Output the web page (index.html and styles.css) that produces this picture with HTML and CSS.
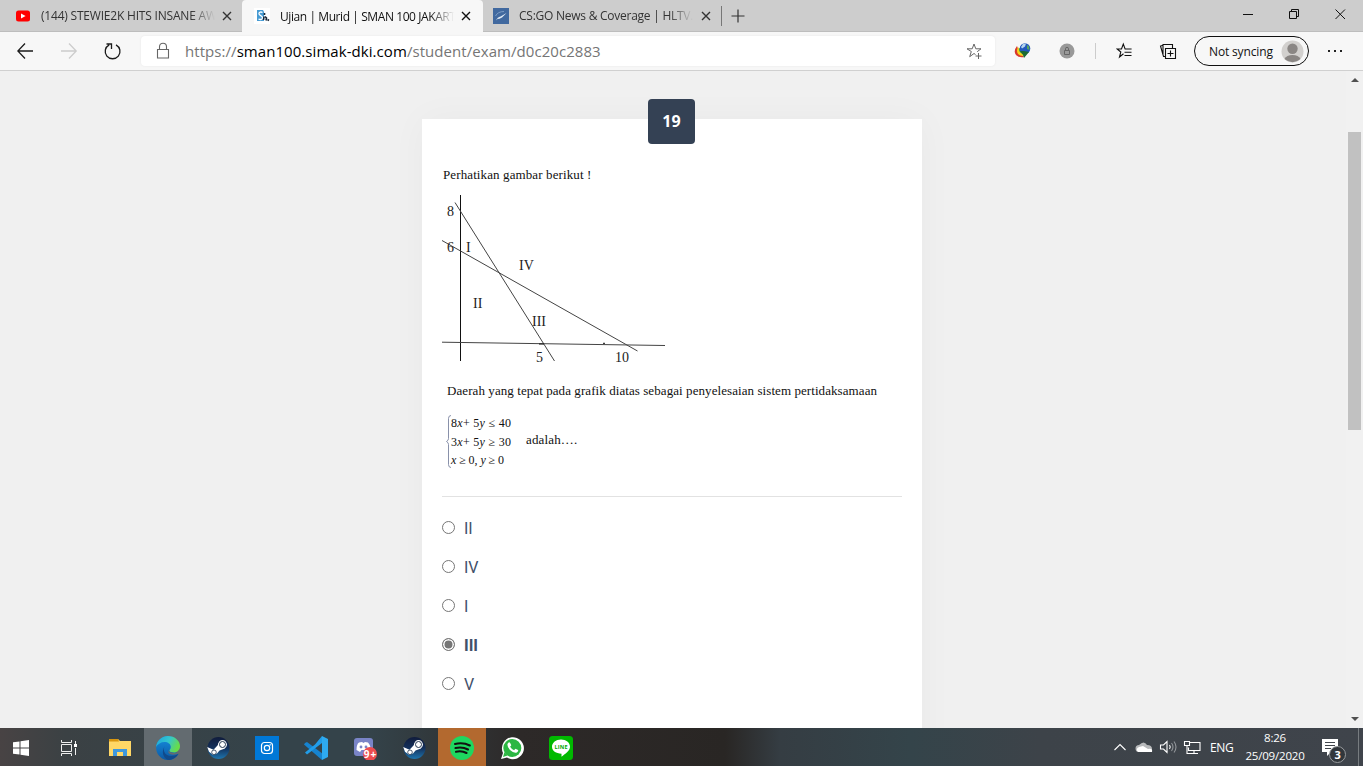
FILE: index.html
```html
<!DOCTYPE html>
<html lang="id">
<head>
<meta charset="utf-8">
<title>Ujian | Murid | SMAN 100 JAKARTA</title>
<link rel="stylesheet" href="styles.css">
</head>
<body>
<div class="screen">
  <header class="tabs">
    <div class="tab tab-first">
      <svg class="fav" width="16" height="16" viewBox="0 0 16 16"><rect x="1" y="2.500" width="14" height="11" rx="2.500" fill="#f00"/><path d="M6 5.400v5.200L10.600 8z" fill="#fff"/></svg>
      <span class="tab-title">(144) STEWIE2K HITS INSANE AW</span>
      <svg class="x" width="10" height="10" viewBox="0 0 10 10"><path d="M1 1l8 8M9 1l-8 8"/></svg>
    </div>
    <div class="tab tab-active">
      <svg class="fav" width="16" height="16" viewBox="0 0 16 16"><path fill="#fff" d="M0 0h16v16H0z"/><path fill="#469bd3" d="M3 2h6l1 2v9H3z"/><path d="M8.500 4.500C7 3.500 5 4 5 5.700 5 7.800 8.500 7.300 8.500 9.700c0 1.800-2 2.300-4 1.300" fill="none" stroke="#fff" stroke-width="1.300"/><path d="M10.500 5v2M10 8.500l-.5 3.500M11 8.500l1.500 1.500-.5 2.500M13.500 11.500l1.500 1" fill="none" stroke="#172638" stroke-width="1.600"/></svg>
      <span class="tab-title">Ujian | Murid | SMAN 100 JAKART</span>
      <svg class="x" width="10" height="10" viewBox="0 0 10 10"><path d="M1 1l8 8M9 1l-8 8"/></svg>
    </div>
    <div class="tab tab-last">
      <svg class="fav" width="16" height="16" viewBox="0 0 16 16"><path fill="#41699f" d="M0 0h16v16H0z"/><path d="M3 12.500c1-2.500 2.500-3.500 4.500-4l6-3.500-4.500 4.500-2.500 1.200-2 .3z" fill="#dfe9f4"/><path d="M2.500 8C4 5 7 3.500 11 3.500" stroke="#7d9dc5" fill="none"/></svg>
      <span class="tab-title">CS:GO News &amp; Coverage | HLTV.</span>
      <svg class="x" width="10" height="10" viewBox="0 0 10 10"><path d="M1 1l8 8M9 1l-8 8"/></svg>
    </div>
    <svg class="plus" width="14" height="14" viewBox="0 0 14 14"><path d="M7 .5v13M.5 7h13" stroke="#333" stroke-width="1.200"/></svg>
    <svg class="winctl" width="106" height="12" viewBox="0 0 106 12" fill="none" stroke="#111"><path d="M0 6.500h10M46.500 3.500h7v7h-7zM48.500 3.500v-2h7v7h-2M92.500 1.500l9.500 9.500M102 1.500L92.500 11"/></svg>
  </header>

  <nav class="toolbar">
    <svg class="navicons" width="112" height="20" viewBox="0 0 112 20" fill="none" stroke="#1b1b1b" stroke-width="1.300"><path d="M16 10H.8M8 2.500L.8 10 8 17.500"/><path stroke="#ccc" d="M44 10h15.200M52 2.500l7.200 7.500-7.200 7.500"/><path d="M92.200 3.800a7.400 7.400 0 1 0 6.800 0M89.500 3h5v5"/></svg>
    <div class="address">
      <svg width="14" height="18" viewBox="0 0 14 18" fill="none" stroke="#666" stroke-width="1.100"><path d="M1.500 7.500h11v8.500h-11zM3.500 7.500V4.700a3.500 3.500 0 0 1 7 0v2.800"/></svg>
      <span class="url">https://<b>sman100.simak-dki.com</b>/student/exam/d0c20c2883</span>
      <svg class="star" width="17" height="17" viewBox="0 0 17 17" fill="none" stroke="#666"><path d="M9.500 11.500l-1.500-1-4.300 3.200 1.600-5.200L1 5.800h5.200L8 1l1.800 4.800H15l-3.800 2.900M12.500 10v6M9.500 13h6"/></svg>
    </div>
    <svg class="ext" width="62" height="18" viewBox="0 0 62 18"><path d="M3 4Q-1 9 2 13q3 3 8 2L5 9z" fill="#d8382d"/><path d="M4 5q-2 4 0 7 2 2 5 2l1-3-4-3z" fill="#f4d41c"/><path d="M5 6q-1 4 4 6l2-1-4-4z" fill="#38a04a"/><circle cx="11" cy="6.500" r="5.300" fill="#2459bc"/><path d="M7 5l2-3 3-.5-1 3-3 2z" fill="#b5d5ee"/><path d="M13 3l2 1 .5 4-2.500-1z" fill="#58a55c"/><path d="M6 9h4l5 1-5 6-1-3z" fill="#1d6b32"/><circle cx="53" cy="9" r="7.500" fill="#999"/><path d="M50.500 8.500h5v4h-5zM51.500 8.500V6.800a1.500 1.500 0 0 1 3 0v1.700" fill="none" stroke="#666"/></svg>
    <i class="sep"></i>
    <svg class="tools" width="64" height="18" viewBox="0 0 64 18" fill="none" stroke="#111" stroke-width="1.100"><path d="M7.500 11.800L3.500 15l1.300-5L1.200 7h4.300L7.300 2l1.800 5h6.500M8.500 10.300h7M8.500 13.500h7"/><path d="M49.500 6.500h10v10h-10zM54.500 8.500v6M51.500 11.500h6M49.500 14.500h-2L44.500 4l2.500-.8M47 12V2.500h9.500v4"/></svg>
    <div class="profile"><span>Not syncing</span><svg width="23" height="23" viewBox="0 0 23 23"><circle cx="11.500" cy="11.500" r="11" fill="#d2d0ce"/><circle cx="11.500" cy="8.700" r="5.200" fill="#8a8684"/><path d="M3.500 19q2-4 8-4t8 4q-8 6.500-16 0z" fill="#8a8684"/></svg></div>
    <svg width="16" height="4" viewBox="0 0 16 4"><path d="M1 1h2v2H1zM7 1h2v2H7zM13 1h2v2h-2z" fill="#222"/></svg>
  </nav>

  <main class="page">
    <article class="card">
      <div class="number">19</div>
      <p class="question first">Perhatikan gambar berikut !</p>
      <svg class="graph" width="230" height="178" viewBox="442 190 230 178">
        <g fill="none" stroke="#444"><path stroke="#111" d="M460.500 195v166"/><path d="M455 202.500L554.500 361M442 240.500L637.500 351M442 342.200l223 3.300"/></g>
        <path d="M603 343.300h2M539 344h5" stroke="#111"/>
        <g class="graph-text"><text x="447" y="216">8</text><text x="447" y="252">6</text><text x="466" y="252">I</text><text x="519" y="270">IV</text><text x="473" y="308">II</text><text x="532" y="326">III</text><text x="536" y="362">5</text><text x="615" y="362">10</text></g>
      </svg>
      <p class="question second">Daerah yang tepat pada grafik diatas sebagai penyelesaian sistem pertidaksamaan</p>
      <div class="system">
        <svg width="72" height="56" viewBox="444 413 72 56">
          <path d="M451 415.500q-2.500 0-2.500 3v20q0 2-2 3 2 1 2 3v20q0 3 2.500 3" fill="none" stroke="#7c84a0" stroke-width=".9"/>
          <g class="eq"><text x="451" y="427" textLength="60">8<tspan class="v">x</tspan>+ 5<tspan class="v">y</tspan> ≤ 40</text><text x="451" y="446" textLength="60">3<tspan class="v">x</tspan>+ 5<tspan class="v">y</tspan> ≥ 30</text><text x="451" y="464" textLength="53"><tspan class="v">x</tspan> ≥ 0, <tspan class="v">y</tspan> ≥ 0</text></g>
        </svg>
        <span class="adalah">adalah….</span>
      </div>
      <div class="options">
        <label><i class="radio"></i><span>II</span></label>
        <label><i class="radio"></i><span>IV</span></label>
        <label><i class="radio"></i><span>I</span></label>
        <label class="chosen"><i class="radio"></i><span>III</span></label>
        <label><i class="radio"></i><span>V</span></label>
      </div>
    </article>
    <aside class="scroll"><i class="up"></i><i class="thumb"></i><i class="down"></i></aside>
  </main>

  <footer class="taskbar">
    <div class="app start"><svg width="16" height="16" viewBox="0 0 16 16"><path d="M0 2.300l6.500-.9v6.100H0zM7.500 1.300L16 0v7.500H7.500zM0 8.500h6.500v6.100L0 13.700zM7.500 8.500H16V16l-8.500-1.200z" fill="#fff"/></svg></div>
    <div class="app tasks"><svg width="18" height="16" viewBox="0 0 18 16" fill="none" stroke="#eee"><path d="M1.500 0v2.500h10V0M1.500 16v-2.500h10V16M1.500 4.500h10v7h-10zM15.500 1v3M15.500 8v7"/><path d="M14 4h3v3h-3z" fill="#fff" stroke="none"/></svg></div>
    <div class="app"><svg width="22" height="20" viewBox="0 0 22 20"><path d="M0 1h9l2 2h11v15H0z" fill="#ffd766"/><path d="M0 1h9l1 2.500H0z" fill="#d9960f"/><path d="M4 11h14v7h-4v-4H8v4H4z" fill="#3e97dc"/></svg></div>
    <div class="app open"><svg width="24" height="24" viewBox="0 0 24 24"><defs><linearGradient id="eg" y2=".4"><stop stop-color="#1ba3df"/><stop offset=".55" stop-color="#34c6ce"/><stop offset="1" stop-color="#67dc4a"/></linearGradient><linearGradient id="eb" x2="0" y2="1"><stop stop-color="#168ee0"/><stop offset="1" stop-color="#0c59a4"/></linearGradient></defs><path d="M12 0a12 12 0 1 0 10.500 18l-3-2 4.500-6z" fill="url(#eb)"/><path d="M0 11C1 4 6 0 12 0c7 0 12 5 12 10 0 4-3 6.500-6 6.500-3 0-4.500-1-4.500-2s1.300-1.500 1.300-3.500C14.800 8 12 6 8.500 6 5 6 1.500 8 0 11z" fill="url(#eg)"/><path d="M9 10c-3 4 0 10 6 10 3 0 5-.8 7.300-2-2 3.500-6 6-10.300 6C7 22 5 15 9 10z" fill="#114a8b"/><path d="M12.500 13q-.5 3.500 5.500 4 3 0 5-1.500-.5 1.500-1.500 2.500Q15 20 12.500 17z" fill="#636b70"/></svg></div>
    <div class="app"><svg width="24" height="24" viewBox="0 0 24 24"><use href="#steam"/></svg></div>
    <div class="app"><svg width="24" height="24" viewBox="0 0 24 24"><path fill="#0078d7" d="M0 0h24v24H0z"/><g fill="none" stroke="#fff" stroke-width="1.200"><rect x="6.500" y="6.500" width="11" height="11" rx="3"/><circle cx="12" cy="12" r="2.700"/><path d="M14.600 8.800h1.200"/></g></svg></div>
    <div class="app"><svg width="24" height="24" viewBox="0 0 24 24"><path d="M1 7l2-1 16 12-1 6L0 8.500z" fill="#1683cf"/><path d="M18 0l-7 8.500L1 16.500 3 18.500 18 7z" fill="#219de9"/><path d="M18 0l6 3v18l-6 3z" fill="#2eaaf0"/></svg></div>
    <div class="app"><svg width="24" height="24" viewBox="0 0 24 24"><rect x="1" y="2" width="19" height="18" rx="3" fill="#7984c7"/><path d="M3.500 14q0-6 2.500-7.500L9 6l1.500 1L12 6l3 .5q3 3 2.500 8l-3 1-2-1.500h-4L7 16z" fill="#fff"/><circle cx="8" cy="11" r="1.400" fill="#7984c7"/><circle cx="13" cy="11" r="1.400" fill="#7984c7"/><circle cx="17" cy="18" r="7" fill="#ec4d50"/><text class="badge-nine" x="10.800" y="22" textLength="12.500">9+</text></svg></div>
    <div class="app"><svg width="24" height="24" viewBox="0 0 24 24"><defs><linearGradient id="sg" x2="0" y2="1"><stop stop-color="#101c3c"/><stop offset=".5" stop-color="#14305b"/><stop offset="1" stop-color="#1e75ae"/></linearGradient><g id="steam"><circle cx="12.500" cy="12" r="11" fill="url(#sg)"/><path d="M1.200 11l6.300 2.700 4-4.200 1.500-3 6 6-5.500 2L11 17.500l-4 1.300-4-3z" fill="#fff"/><circle cx="16.500" cy="8.500" r="4.400" fill="#fff"/><circle cx="16.500" cy="8.500" r="3" fill="none" stroke="#26374f"/><circle cx="8" cy="16.300" r="2.300" fill="#fff" stroke="#26374f" stroke-width=".8"/></g></defs><use href="#steam"/></svg></div>
    <div class="app alert"><svg width="24" height="24" viewBox="0 0 24 24"><circle cx="12" cy="12" r="12" fill="#1ed760"/><path d="M5 8q8-2 14.800 1.500M5.500 12q7-1.500 12.500 1.500M6 15.700q6-1.200 10.500 1.300" fill="none" stroke="#111" stroke-width="2.100" stroke-linecap="round"/></svg></div>
    <div class="app"><svg width="24" height="24" viewBox="0 0 24 24"><path d="M1 23l2-6A11 11 0 1 1 7 21.500z" fill="#fff"/><circle cx="12.300" cy="12" r="9" fill="#2cb742"/><path d="M3 21l1.500-5 3 3.500z" fill="#2cb742"/><path d="M7.500 8q1.500-3 2.800-.8l1 2-1.200 1.500q1.500 2.500 4 3.500l1.300-1.500 2.700 1.300q.5 1-1.300 2.500-3 1-6.800-2.500-3-3-2.500-6z" fill="#fff"/></svg></div>
    <div class="app"><svg width="24" height="24" viewBox="0 0 24 24"><rect width="24" height="24" rx="3.500" fill="#00b900"/><path d="M12 3.500c5 0 9 3 9 7.300 0 4.200-5 7.200-8.500 10v-3C7 17.500 3 15 3 10.800S7 3.500 12 3.500z" fill="#fff"/><text class="line-text" x="5.500" y="13" textLength="13">LINE</text></svg></div>
    <div class="tray">
      <svg width="87" height="16" viewBox="0 0 87 16" fill="none" stroke="#fff" stroke-width="1.100"><path d="M.5 11L6 5.500l5.500 5.500"/><path d="M25 13a3.500 3.500 0 0 1 0-7q5-5 8 0 5 0 5 4 0 3-3 3z" fill="#b7b9bb" stroke="none"/><path d="M24 13q-3-3 1-5l4-1 5 3q5-1 4 3z" fill="#fff" stroke="none"/><path d="M46.500 6h3L53 2.500v11L49.500 10h-3zM55.500 6q1.500 2 0 4"/><path d="M57.500 4q3 4 0 8M60 2.500q4 5.500 0 11" stroke="#92969a"/><path d="M75.500 3.500H86v8H74.500v-3M80 11.500v3M76 14.500h8M70.500 2.500h5v4h-5zM73 6.500v8h3"/></svg>
      <span class="lang">ENG</span>
      <span class="clock">8:26<br>25/09/2020</span>
      <svg class="note" width="26" height="26" viewBox="0 0 26 26"><path d="M1 1h16v13H10l-4 4v-4H1z" fill="#fff"/><path d="M4 4.500h10M4 7.500h10M4 10.500h6" stroke="#41464d"/><circle cx="16.500" cy="16.500" r="8" fill="#31363b" stroke="#989b9e"/><text class="three" x="13.500" y="20.500">3</text></svg>
      <i class="desktop"></i>
    </div>
  </footer>
</div>
</body>
</html>
```

FILE: styles.css
```css
* { box-sizing: border-box; }
body { margin: 0; overflow: hidden; font-family: "Open Sans", "Noto Sans", sans-serif; }
svg { display: block; flex: none; }
.screen { width: 1363px; height: 766px; display: flex; flex-direction: column; }
.tabs { height: 32px; flex: none; display: flex; background: #cdcdcd; border-bottom: 1px solid #bdbdbd; }
.tab { width: 242px; height: 31px; display: flex; align-items: center; padding-left: 15px; font-size: 12px; letter-spacing: -.2px; color: #333; }
.tab-active { width: 241px; height: 32px; padding-left: 12px; background: #f7f7f7; border-radius: 4px 4px 0 0; color: #111; letter-spacing: -.42px; }
.tab-last { width: 239px; padding-left: 10px; letter-spacing: -.25px; border-right: 1px solid; border-image: linear-gradient(transparent 20%, #777 20%, #777 82%, transparent 82%) 1; }
.fav { margin-right: 10px; }
.tab-title { width: 176px; flex: none; white-space: nowrap; -webkit-mask-image: linear-gradient(90deg, #000 150px, transparent 174px); mask-image: linear-gradient(90deg, #000 150px, transparent 174px); }
.x { margin-left: auto; margin-right: 10px; stroke: #333; stroke-width: 1.4; }
.tab-active .x { margin-right: 12px; stroke: #111; }
.plus { margin: 9px 0 0 9px; }
.winctl { margin: 8px 14px 0 auto; }
.toolbar { height: 39px; flex: none; display: flex; align-items: center; background: #f7f7f7; border-bottom: 1px solid #d0d0d0; padding-left: 17px; }
.address { width: 854px; height: 30px; margin-left: 12px; padding: 0 12px 0 15px; display: flex; align-items: center; background: #fff; border-radius: 4px; box-shadow: 0 0 2px #e5e5e5; }
.url { margin-left: 15px; font-size: 15px; letter-spacing: .06px; color: #757575; white-space: nowrap; }
.url b { font-weight: 400; color: #000; }
.star { margin-left: auto; }
.ext { margin-left: 19px; }
.sep { width: 1px; height: 16px; margin-left: 19px; background: #ccc; }
.tools { margin-left: 20px; }
.profile { width: 115px; height: 30px; margin: 0 18px 0 14px; padding: 0 4px 0 14px; border: 1px solid #111; border-radius: 15px; display: flex; align-items: center; justify-content: space-between; font-size: 12px; letter-spacing: -.15px; white-space: nowrap; color: #111; }
.page { height: 657px; flex: none; display: flex; background: #f0f0f0; overflow: hidden; }
.card { width: 500px; height: 660px; margin: 48px 0 0 422px; padding: 0 20px; background: #fff; box-shadow: 0 0 35px rgba(0,0,0,.035); }
.number { width: 47px; height: 45px; margin: -20px 0 0 206px; border-radius: 4px; background: #344154; color: #fff; font-size: 16px; font-weight: 700; line-height: 44px; text-align: center; }
.question { margin: 22px 0 0 1px; height: 18px; font: 13px/18px "Liberation Serif", serif; white-space: nowrap; color: #111; }
.first { letter-spacing: .11px; }
.graph { margin-top: 6px; }
.graph-text { font: 14px "Liberation Serif", serif; fill: #222; }
.second { margin: 14px 0 0 5px; letter-spacing: .075px; }
.system { display: flex; height: 56px; margin: 13px 0 0 2px; font: 13px/18px "Liberation Serif", serif; color: #111; }
.eq { font: 12px "Liberation Serif", serif; fill: #111; }
.v { font-style: italic; }
.adalah { margin: 18px 0 0 10px; letter-spacing: .15px; }
.options { margin-top: 27px; border-top: 1px solid #e2e2e2; padding-top: 11px; }
.options label { height: 39px; display: flex; align-items: center; font: 400 16px Roboto, sans-serif; color: #42506a; }
.options span { padding-top: 2px; }
.radio { width: 13px; height: 13px; margin-right: 9px; border: 1px solid #767676; border-radius: 50%; background: #fff; }
.options .chosen { font-weight: 700; }
.chosen .radio { background: #767676; box-shadow: inset 0 0 0 1.5px #fff; }
.scroll { width: 17px; margin-left: auto; padding: 7px 0 7px; display: flex; flex-direction: column; align-items: center; background: #f1f1f1; }
.up, .down { border: 4px solid transparent; border-top: 0; border-bottom-color: #505050; }
.down { margin-top: auto; border-top: 4px solid #505050; border-bottom: 0; }
.thumb { width: 13px; height: 298px; margin-top: 50px; background: #c1c1c1; }
.taskbar { height: 38px; flex: none; display: flex; background: linear-gradient(90deg, #484344 0, #3b4144 65px, #34434a 280px, #34434a 370px, #2d2928 520px, #292624 725px, #353d43 780px, #34444a 910px, #3d4349 1040px, #3f444b 1363px); }
.app { width: 49px; height: 38px; display: flex; align-items: center; justify-content: center; padding-top: 2px; }
.start { width: 44px; padding-right: 2px; }
.tasks { width: 51px; padding-right: 2px; }
.open { background: #636b70; width: 48px; margin: 0 1px 0 0; }
.alert { background: #b3692f; width: 48px; margin: 0 1px 0 0; }
.badge-nine { font: 700 10px "Open Sans", sans-serif; fill: #fff; }
.line-text { font: 700 5.5px "Open Sans", sans-serif; fill: #00a900; }
.tray { margin-left: auto; display: flex; align-items: center; color: #fff; font-size: 12px; letter-spacing: -.3px; }
.lang { margin-left: 9px; width: 24px; }
.clock { width: 60px; margin-left: 11px; line-height: 18px; text-align: center; white-space: nowrap; font-size: 11.5px; letter-spacing: -.2px; }
.note { margin-left: 16px; margin-top: 7px; }
.three { font: 700 11px "Open Sans", sans-serif; fill: #fff; }
.desktop { width: 1px; height: 38px; margin: 0 4px 0 11px; background: #777c80; }
```
